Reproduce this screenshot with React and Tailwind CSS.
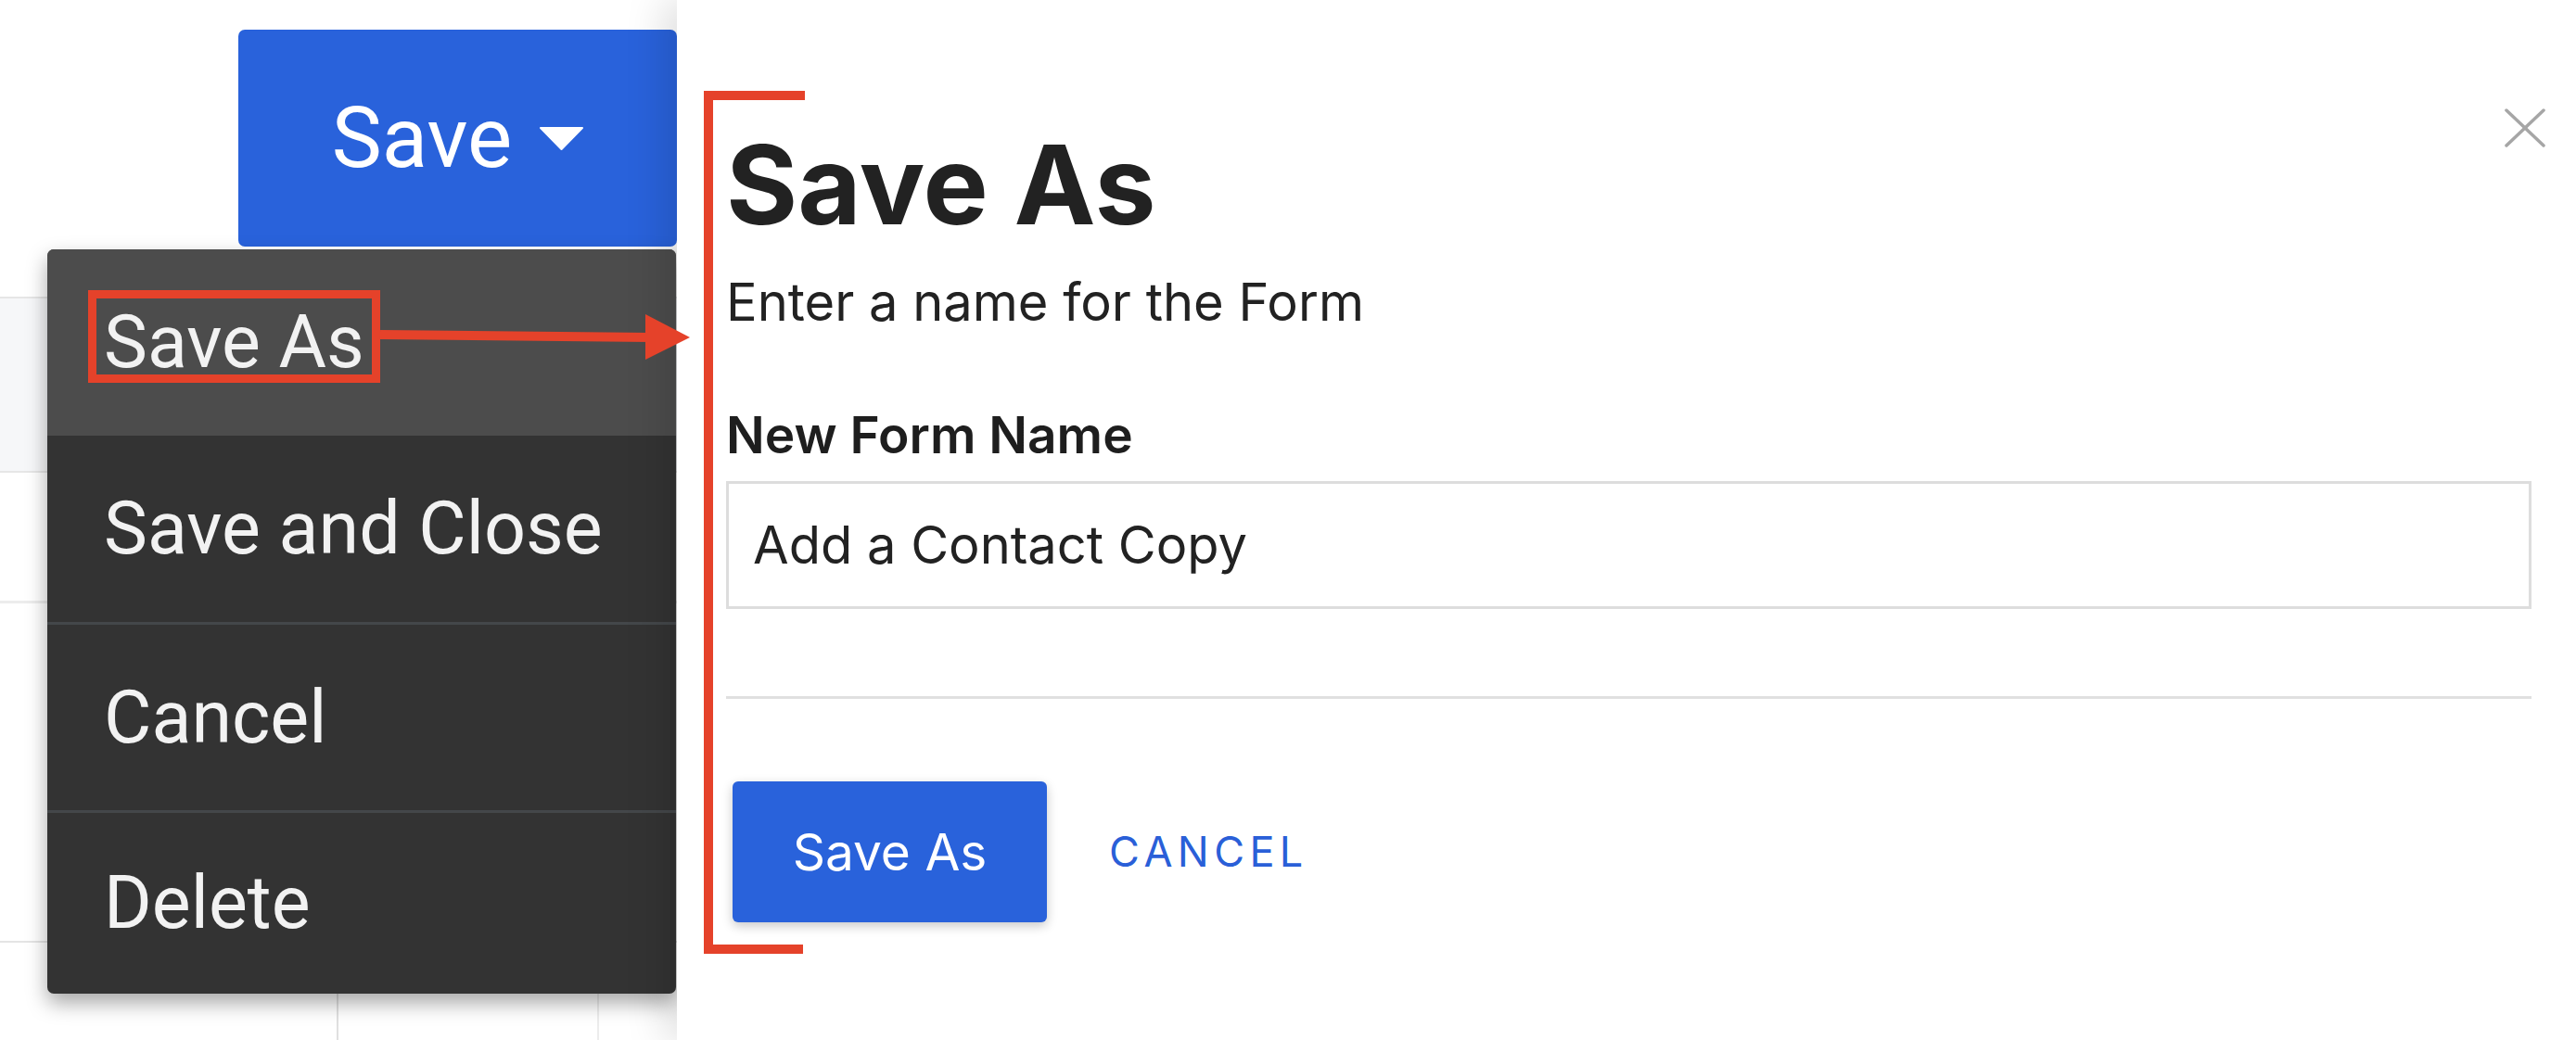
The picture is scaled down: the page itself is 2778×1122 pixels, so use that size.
import { useState } from 'react'

const menuItems = ['Save As', 'Save and Close', 'Cancel', 'Delete']

function Caret() {
  return (
    <svg width="47" height="25" viewBox="0 0 47 25" className="shrink-0">
      <polygon points="1,1 46,1 23.5,24" fill="#ffffff" stroke="#ffffff" strokeWidth="2" strokeLinejoin="round" />
    </svg>
  )
}

function CloseIcon() {
  return (
    <svg width="44" height="42" viewBox="0 0 44 42" className="shrink-0 -mr-[15px]">
      <line x1="2" y1="2" x2="42" y2="40" stroke="#a6a6a6" strokeWidth="3.5" strokeLinecap="round" />
      <line x1="42" y1="2" x2="2" y2="40" stroke="#a6a6a6" strokeWidth="3.5" strokeLinecap="round" />
    </svg>
  )
}

// red callouts drawn over the screenshot
function Annotations() {
  return (
    <svg className="absolute inset-0 z-30 pointer-events-none" width="2778" height="1122" viewBox="0 0 2778 1122">
      <rect x="99.5" y="317.5" width="306" height="91" fill="none" stroke="#e5422a" strokeWidth="9" />
      <line x1="410" y1="361" x2="702" y2="364" stroke="#e5422a" strokeWidth="10" />
      <polygon points="696,339 744,364 696,388" fill="#e5422a" />
      <polyline points="868,103 764,103 764,1024 866,1024" fill="none" stroke="#e5422a" strokeWidth="10" />
    </svg>
  )
}

function SaveMenu() {
  return (
    <div className="absolute left-[51px] top-[269px] z-10 w-[678px] rounded-[7px] overflow-hidden bg-[#333333] shadow-[0_10px_22px_rgba(0,0,0,0.35)] font-['Roboto',sans-serif] text-[79px] text-[#f2f2f2]">
      {menuItems.map((label, i) => (
        <div
          key={label}
          className={`flex items-center pl-[61px] ${
            i === 0 ? 'h-[201px] bg-[#4c4c4c]' : i === 1 ? 'h-[201px]' : i === 2 ? 'h-[203px] border-t-[3px] border-[#44474a]' : 'h-[198px] border-t-[3px] border-[#44474a]'
          }`}
        >
          {label}
        </div>
      ))}
    </div>
  )
}

export default function App() {
  const [name, setName] = useState('Add a Contact Copy')

  return (
    <div className="relative flex w-[2778px] h-[1122px] overflow-hidden bg-white">
      {/* page behind the drawer */}
      <div className="relative flex flex-col w-[730px] shrink-0 h-full bg-white">
        <div className="flex justify-end pt-[32px] h-[320px] shrink-0">
          <button className="flex items-center justify-center gap-[30px] w-[473px] h-[234px] rounded-[7px] bg-[#2962db] text-white font-['Roboto',sans-serif] text-[91px]">
            <span>Save</span>
            <Caret />
          </button>
        </div>
        <div className="h-[190px] shrink-0 border-y-2 border-[#e6e6e6] bg-[#f6f7f9]" />
        <div className="h-[141px] shrink-0 border-b-[3px] border-[#ececec]" />
        <div className="h-[366px] shrink-0 border-b-2 border-[#e4e4e4]" />
        <div className="flex flex-1">
          <div className="w-[365px] border-r-2 border-[#e0e0e0]" />
          <div className="w-[281px] border-r-2 border-[#ececec]" />
          <div className="flex-1" />
        </div>
        <SaveMenu />
      </div>

      {/* Save As drawer */}
      <div className="relative z-20 flex-1 flex flex-col h-full bg-white pl-[53px] pr-[48px] pt-[117px] shadow-[-14px_0_40px_rgba(0,0,0,0.13)] font-['Inter',sans-serif] text-[#222222]">
        <div className="flex items-start justify-between">
          <h1 className="mt-[23px] text-[118px] leading-none font-bold">Save As</h1>
          <CloseIcon />
        </div>
        <p className="mt-[35px] text-[56px] leading-[1.2]">Enter a name for the Form</p>
        <label className="mt-[76px] text-[55px] leading-[1.2] font-semibold text-[#1e1e1e]">New Form Name</label>
        <input
          value={name}
          onChange={e => setName(e.target.value)}
          className="mt-[17px] h-[138px] w-full border-[3px] border-[#dddddd] pl-[26px] text-[56px] text-[#222222] outline-none font-['Inter',sans-serif]"
        />
        <div className="mt-[94px] h-[3px] bg-[#e0e0e0]" />
        <div className="mt-[89px] flex items-center gap-[67px]">
          <button className="ml-[7px] w-[339px] h-[152px] rounded-[6px] bg-[#2962db] text-white text-[55px] shadow-[0_4px_12px_rgba(0,0,0,0.22)]">
            Save As
          </button>
          <button className="text-[45px] tracking-[0.12em] text-[#2a5fd8]">CANCEL</button>
        </div>
      </div>

      <Annotations />
    </div>
  )
}
